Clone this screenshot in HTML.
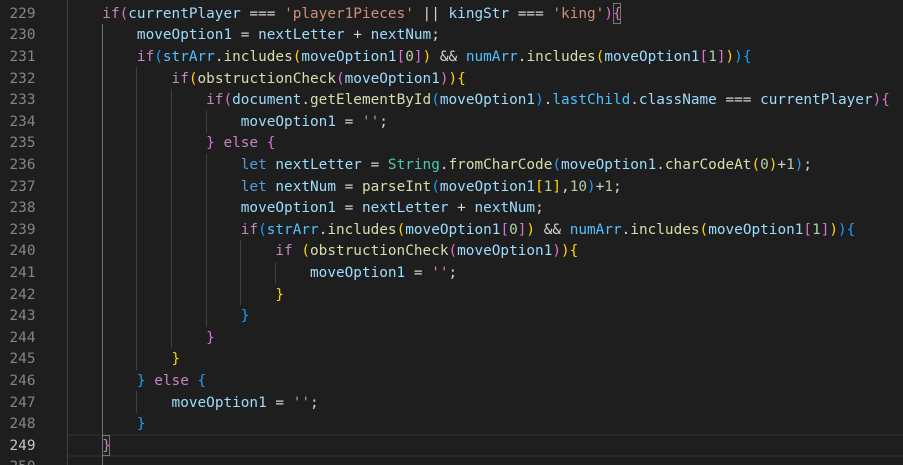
<!DOCTYPE html>
<html><head><meta charset="utf-8">
<style>
html,body{margin:0;padding:0;background:#1e1e1e;width:903px;height:465px;overflow:hidden}
#e{position:relative;width:903px;height:465px;overflow:hidden;font-family:"DejaVu Sans Mono","Liberation Mono",monospace;font-size:14.38px;color:#d4d4d4}
.n,.l{position:absolute;height:21.6px;line-height:21.6px;white-space:pre;margin-top:1.6px;filter:blur(0.25px)}
.n{left:0;width:35.5px;text-align:right;color:#858585}
.l{left:102.3px}
.g{position:absolute;width:1px;background:#404040}
.v{color:#9cdcfe}.c{color:#4fc1ff}.k{color:#c586c0}.f{color:#dcdcaa}.s{color:#ce9178}.d{color:#b5cea8}.t{color:#4ec9b0}.w{color:#569cd6}
.p{color:#da70d6}.y{color:#ffd700}.b{color:#179fff}
</style></head><body><div id="e">
<div style="position:absolute;left:68px;top:434px;width:835px;height:23px;box-sizing:border-box;border-top:2px solid #282828;border-bottom:2px solid #282828"></div>
<div class="g" style="left:67px;top:0;height:465px"></div>
<div class="g" style="left:102px;top:24px;height:441px;background:#707070"></div>
<div class="g" style="left:136px;top:67px;height:303px"></div>
<div class="g" style="left:136px;top:391px;height:22px"></div>
<div class="g" style="left:171px;top:89px;height:259px"></div>
<div class="g" style="left:206px;top:111px;height:22px"></div>
<div class="g" style="left:206px;top:154px;height:173px"></div>
<div class="g" style="left:240px;top:240px;height:65px"></div>
<div class="g" style="left:275px;top:262px;height:22px"></div>
<div style="position:absolute;left:613px;top:3px;width:8px;height:21px;box-sizing:border-box;border:1px solid #777;background:rgba(0,100,0,.1)"></div>
<div style="position:absolute;left:102px;top:435px;width:8px;height:21px;box-sizing:border-box;border:1px solid #777;background:rgba(0,100,0,.1)"></div>

<div class="n" style="top:2.2px">229</div>
<div class="n" style="top:23.8px">230</div>
<div class="n" style="top:45.4px">231</div>
<div class="n" style="top:67px">232</div>
<div class="n" style="top:88.6px">233</div>
<div class="n" style="top:110.2px">234</div>
<div class="n" style="top:131.8px">235</div>
<div class="n" style="top:153.4px">236</div>
<div class="n" style="top:175px">237</div>
<div class="n" style="top:196.6px">238</div>
<div class="n" style="top:218.2px">239</div>
<div class="n" style="top:239.8px">240</div>
<div class="n" style="top:261.4px">241</div>
<div class="n" style="top:283px">242</div>
<div class="n" style="top:304.6px">243</div>
<div class="n" style="top:326.2px">244</div>
<div class="n" style="top:347.8px">245</div>
<div class="n" style="top:369.4px">246</div>
<div class="n" style="top:391px">247</div>
<div class="n" style="top:412.6px">248</div>
<div class="n" style="top:434.2px;color:#c6c6c6">249</div>
<div class="n" style="top:455.8px">250</div>

<div class="l" style="top:2.2px"><span class="k">if</span><span class="p">(</span><span class="v">currentPlayer</span> === <span class="s">'player1Pieces'</span> || <span class="v">kingStr</span> === <span class="s">'king'</span><span class="p">){</span></div>
<div class="l" style="top:23.8px">    <span class="v">moveOption1</span> = <span class="v">nextLetter</span> + <span class="v">nextNum</span>;</div>
<div class="l" style="top:45.4px">    <span class="k">if</span><span class="b">(</span><span class="c">strArr</span>.<span class="f">includes</span><span class="y">(</span><span class="v">moveOption1</span><span class="p">[</span><span class="d">0</span><span class="p">]</span><span class="y">)</span> &amp;&amp; <span class="c">numArr</span>.<span class="f">includes</span><span class="y">(</span><span class="v">moveOption1</span><span class="p">[</span><span class="d">1</span><span class="p">]</span><span class="y">)</span><span class="b">){</span></div>
<div class="l" style="top:67px">        <span class="k">if</span><span class="y">(</span><span class="f">obstructionCheck</span><span class="p">(</span><span class="v">moveOption1</span><span class="p">)</span><span class="y">){</span></div>
<div class="l" style="top:88.6px">            <span class="k">if</span><span class="p">(</span><span class="v">document</span>.<span class="f">getElementById</span><span class="b">(</span><span class="v">moveOption1</span><span class="b">)</span>.<span class="c">lastChild</span>.<span class="v">className</span> === <span class="v">currentPlayer</span><span class="p">){</span></div>
<div class="l" style="top:110.2px">                <span class="v">moveOption1</span> = <span class="s">''</span>;</div>
<div class="l" style="top:131.8px">            <span class="p">}</span> <span class="k">else</span> <span class="p">{</span></div>
<div class="l" style="top:153.4px">                <span class="w">let</span> <span class="v">nextLetter</span> = <span class="t">String</span>.<span class="f">fromCharCode</span><span class="b">(</span><span class="v">moveOption1</span>.<span class="f">charCodeAt</span><span class="y">(</span><span class="d">0</span><span class="y">)</span>+<span class="d">1</span><span class="b">)</span>;</div>
<div class="l" style="top:175px">                <span class="w">let</span> <span class="v">nextNum</span> = <span class="f">parseInt</span><span class="b">(</span><span class="v">moveOption1</span><span class="y">[</span><span class="d">1</span><span class="y">]</span>,<span class="d">10</span><span class="b">)</span>+<span class="d">1</span>;</div>
<div class="l" style="top:196.6px">                <span class="v">moveOption1</span> = <span class="v">nextLetter</span> + <span class="v">nextNum</span>;</div>
<div class="l" style="top:218.2px">                <span class="k">if</span><span class="b">(</span><span class="c">strArr</span>.<span class="f">includes</span><span class="y">(</span><span class="v">moveOption1</span><span class="p">[</span><span class="d">0</span><span class="p">]</span><span class="y">)</span> &amp;&amp; <span class="c">numArr</span>.<span class="f">includes</span><span class="y">(</span><span class="v">moveOption1</span><span class="p">[</span><span class="d">1</span><span class="p">]</span><span class="y">)</span><span class="b">){</span></div>
<div class="l" style="top:239.8px">                    <span class="k">if</span> <span class="y">(</span><span class="f">obstructionCheck</span><span class="p">(</span><span class="v">moveOption1</span><span class="p">)</span><span class="y">){</span></div>
<div class="l" style="top:261.4px">                        <span class="v">moveOption1</span> = <span class="s">''</span>;</div>
<div class="l" style="top:283px">                    <span class="y">}</span></div>
<div class="l" style="top:304.6px">                <span class="b">}</span></div>
<div class="l" style="top:326.2px">            <span class="p">}</span></div>
<div class="l" style="top:347.8px">        <span class="y">}</span></div>
<div class="l" style="top:369.4px">    <span class="b">}</span> <span class="k">else</span> <span class="b">{</span></div>
<div class="l" style="top:391px">        <span class="v">moveOption1</span> = <span class="s">''</span>;</div>
<div class="l" style="top:412.6px">    <span class="b">}</span></div>
<div class="l" style="top:434.2px"><span class="p">}</span></div>
</div></body></html>
